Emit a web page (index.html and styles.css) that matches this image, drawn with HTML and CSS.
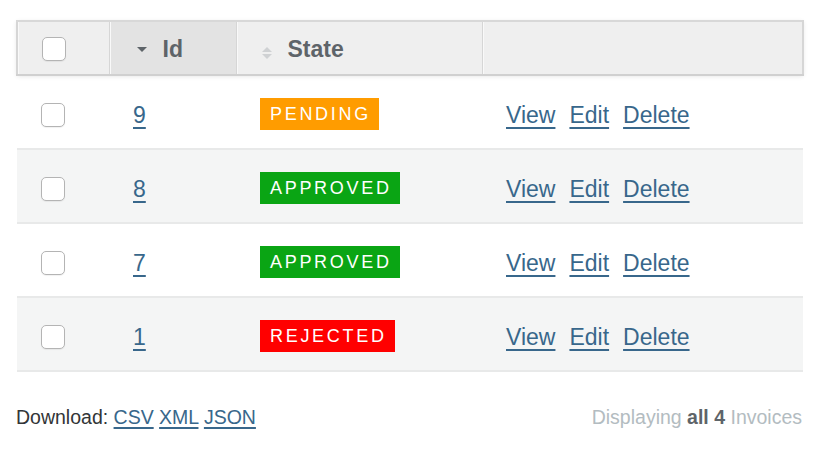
FILE: index.html
```html
<!DOCTYPE html>
<html>
<head>
<meta charset="utf-8">
<link rel="stylesheet" href="styles.css">
</head>
<body>
<div class="page">
  <table class="index-table">
    <colgroup>
      <col class="c-sel"><col class="c-id"><col class="c-state"><col class="c-act">
    </colgroup>
    <thead>
      <tr>
        <th class="col-sel"><span class="cb"></span></th>
        <th class="sortable sorted"><span class="arrow-down"></span>Id</th>
        <th class="sortable"><span class="arrows"><span class="up"></span><span class="dn"></span></span>State</th>
        <th class="last"></th>
      </tr>
    </thead>
    <tbody>
      <tr class="odd">
        <td class="col-sel"><span class="cb"></span></td>
        <td><a href="#">9</a></td>
        <td><span class="tag pending">Pending</span></td>
        <td class="actions"><a href="#">View</a><a href="#">Edit</a><a href="#">Delete</a></td>
      </tr>
      <tr class="even">
        <td class="col-sel"><span class="cb"></span></td>
        <td><a href="#">8</a></td>
        <td><span class="tag approved">Approved</span></td>
        <td class="actions"><a href="#">View</a><a href="#">Edit</a><a href="#">Delete</a></td>
      </tr>
      <tr class="odd">
        <td class="col-sel"><span class="cb"></span></td>
        <td><a href="#">7</a></td>
        <td><span class="tag approved">Approved</span></td>
        <td class="actions"><a href="#">View</a><a href="#">Edit</a><a href="#">Delete</a></td>
      </tr>
      <tr class="even">
        <td class="col-sel"><span class="cb"></span></td>
        <td><a href="#">1</a></td>
        <td><span class="tag rejected">Rejected</span></td>
        <td class="actions"><a href="#">View</a><a href="#">Edit</a><a href="#">Delete</a></td>
      </tr>
    </tbody>
  </table>
  <div class="footer">
    <div class="download">Download: <a href="#">CSV</a> <a href="#">XML</a> <a href="#">JSON</a></div>
    <div class="info">Displaying <b>all 4</b> Invoices</div>
  </div>
</div>
</body>
</html>
```

FILE: styles.css
```css
html, body {
  margin: 0;
  padding: 0;
  background: #fff;
  font-family: "Liberation Sans", Arial, Helvetica, sans-serif;
}
.page {
  padding: 20px 22px 0 16px;
  width: 786px;
}
.index-table {
  width: 786px;
  border-collapse: collapse;
  table-layout: fixed;
}
.c-sel { width: 92px; }
.c-id { width: 127px; }
.c-state { width: 246px; }
.c-act { width: 321px; }

thead tr {
  box-shadow: 0 1px 5px rgba(0, 0, 0, 0.12);
}
th {
  height: 54px;
  padding: 2px 0 0 24px;
  background: #efefef;
  border-top: 2px solid #d8d8d8;
  border-bottom: 2px solid #d0d0d0;
  border-right: 1px solid #d6d6d6;
  box-shadow: inset 1px 0 0 #f9f9f9;
  text-align: left;
  font-size: 23px;
  font-weight: bold;
  color: #5e6469;
  vertical-align: middle;
  box-sizing: border-box;
}
th:first-child { border-left: 2px solid #d6d6d6; }
th.last { border-right: 2px solid #d6d6d6; }
th.sorted { background: #e3e3e3; }
.arrow-down {
  display: inline-block;
  width: 0;
  height: 0;
  border-left: 5px solid transparent;
  border-right: 5px solid transparent;
  border-top: 5px solid #5e6469;
  margin: 0 16px 0 3px;
  vertical-align: 5px;
}
.arrows {
  display: inline-flex;
  flex-direction: column;
  gap: 2px;
  margin: 0 16px 0 1px;
  vertical-align: 5px;
}
.arrows .up {
  width: 0; height: 0;
  border-left: 5px solid transparent;
  border-right: 5px solid transparent;
  border-bottom: 5px solid #cfd1d3;
}
.arrows .dn {
  width: 0; height: 0;
  border-left: 5px solid transparent;
  border-right: 5px solid transparent;
  border-top: 5px solid #cfd1d3;
}

td {
  height: 74px;
  padding: 6px 0 0 24px;
  border-bottom: 2px solid #e8e9e9;
  vertical-align: middle;
  font-size: 23px;
  color: #323537;
  box-sizing: border-box;
}
td.col-sel, th.col-sel { padding-left: 24px; }
tr.even td { background: #f4f5f5; }

.cb {
  display: inline-block;
  width: 22px;
  height: 22px;
  border: 1px solid #b4b4b4;
  border-radius: 5px;
  background: #fff;
  box-shadow: 0 1px 1px rgba(0, 0, 0, 0.06);
  vertical-align: middle;
}
td .cb { margin-top: -2px; }
th .cb { margin-top: -2px; }

a {
  color: #38678b;
  text-decoration: underline;
  text-decoration-thickness: 2px;
  text-underline-offset: 4px;
}
td a { font-size: 23px; }
.actions a { margin-right: 14px; }

.tag {
  display: inline-block;
  padding: 0 8px 0 10px;
  height: 32px;
  line-height: 32px;
  font-size: 18px;
  letter-spacing: 2.7px;
  text-transform: uppercase;
  color: #fff;
  vertical-align: middle;
  margin-top: -2px;
}
.pending { background: #ff9c00; }
.approved { background: #0aa514; }
.rejected { background: #ff0000; }

.footer {
  display: flex;
  justify-content: space-between;
  align-items: baseline;
  margin-top: 34px;
  font-size: 19.5px;
}
.download { color: #323537; }
.download a { text-underline-offset: 3px; }
.info { color: #b3bcc1; }
.info b { color: #5e6469; }
```
